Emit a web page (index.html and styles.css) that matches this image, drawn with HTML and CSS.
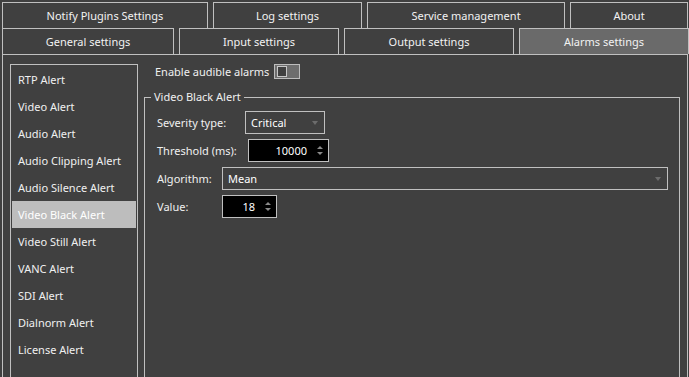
FILE: index.html
```html
<!DOCTYPE html>
<html>
<head>
<meta charset="utf-8">
<link rel="stylesheet" href="styles.css">
</head>
<body>
<div class="app">
  <div class="tabrow row1">
    <div class="tab t-notify">Notify Plugins Settings</div>
    <div class="tab t-log">Log settings</div>
    <div class="tab t-service">Service management</div>
    <div class="tab t-about">About</div>
  </div>
  <div class="tabrow row2">
    <div class="tab t-general">General settings</div>
    <div class="tab t-input">Input settings</div>
    <div class="tab t-output">Output settings</div>
    <div class="tab t-alarms selected">Alarms settings</div>
  </div>
  <div class="pane">
    <ul class="alert-list">
      <li>RTP Alert</li>
      <li>Video Alert</li>
      <li>Audio Alert</li>
      <li>Audio Clipping Alert</li>
      <li>Audio Silence Alert</li>
      <li class="active">Video Black Alert</li>
      <li>Video Still Alert</li>
      <li>VANC Alert</li>
      <li>SDI Alert</li>
      <li>Dialnorm Alert</li>
      <li>License Alert</li>
    </ul>
    <div class="settings">
      <div class="audible">
        <span>Enable audible alarms</span>
        <span class="toggle"><span class="knob"></span></span>
      </div>
      <fieldset class="group">
        <legend>Video Black Alert</legend>
        <div class="field">
          <span class="lbl lbl-sev">Severity type:</span>
          <div class="combo combo-sev"><span>Critical</span><span class="arrow"></span></div>
        </div>
        <div class="field">
          <span class="lbl lbl-thr">Threshold (ms):</span>
          <div class="spin spin-thr"><span class="val">10000</span><span class="spin-btns"><span class="up"></span><span class="down"></span></span></div>
        </div>
        <div class="field">
          <span class="lbl lbl-alg">Algorithm:</span>
          <div class="combo combo-alg"><span>Mean</span><span class="arrow"></span></div>
        </div>
        <div class="field">
          <span class="lbl lbl-alg">Value:</span>
          <div class="spin spin-val"><span class="val">18</span><span class="spin-btns"><span class="up"></span><span class="down"></span></span></div>
        </div>
      </fieldset>
    </div>
  </div>
</div>
</body>
</html>
```

FILE: styles.css
```css
html, body {
  margin: 0;
  padding: 0;
  background: #404040;
  overflow: hidden;
}
body {
  width: 689px;
  height: 377px;
  font-family: "Noto Sans", "Open Sans", sans-serif;
  font-size: 11px;
  color: #f0f0f0;
}
.app {
  padding-top: 2px;
}
.tabrow {
  display: flex;
  gap: 5px;
  margin-left: 2px;
}
.tab {
  box-sizing: border-box;
  height: 26px;
  border: 1px solid #c0c0c0;
  border-bottom: none;
  display: flex;
  align-items: center;
  justify-content: center;
  background: #404040;
  color: #f2f2f2;
}
.t-notify { width: 206px; }
.t-log { width: 149px; }
.t-service { width: 198px; }
.t-about { width: 118px; }
.t-general { width: 172px; }
.t-input { width: 160px; }
.t-output { width: 170px; }
.t-alarms { width: 170px; }
.tab.selected { background: #6a6a6a; }

.pane {
  box-sizing: border-box;
  margin-left: 2px;
  width: 686px;
  height: 340px;
  border: 1px solid #c0c0c0;
  border-bottom: none;
  padding: 9px 7px 0 7px;
  display: flex;
}
.alert-list {
  box-sizing: border-box;
  list-style: none;
  margin: 0;
  padding: 1px;
  width: 128px;
  border: 1px solid #c0c0c0;
  border-bottom: none;
}
.alert-list li {
  height: 27px;
  line-height: 27px;
  padding-left: 6px;
  white-space: nowrap;
}
.alert-list li.active {
  background: #bdbdbd;
  color: #ffffff;
}
.settings {
  flex: 1;
  margin-left: 6px;
  display: flex;
  flex-direction: column;
}
.audible {
  height: 15px;
  display: flex;
  align-items: center;
  gap: 5px;
  padding-left: 11px;
}
.toggle {
  box-sizing: border-box;
  width: 26px;
  height: 15px;
  border: 1px solid #bdbdbd;
  background: #6e6e6e;
  padding: 1px 2px;
  display: flex;
  align-items: center;
}
.knob {
  box-sizing: border-box;
  width: 10px;
  height: 11px;
  border: 1px solid #c8c8c8;
  background: #404040;
}
.group {
  flex: 1;
  margin: 10px 0 0 0;
  border: 1px solid #c0c0c0;
  border-bottom: none;
  padding: 6px 11px 0 12px;
  min-width: 0;
}
.group legend {
  margin-left: -6px;
  padding: 0 3px;
  line-height: 16px;
}
.field {
  display: flex;
  align-items: center;
  height: 23px;
  margin-bottom: 5px;
}
.lbl { flex: none; white-space: nowrap; }
.lbl-sev { width: 88px; }
.lbl-thr { width: 91px; }
.lbl-alg { width: 65px; }
.combo {
  box-sizing: border-box;
  height: 23px;
  border: 1px solid #c0c0c0;
  display: flex;
  align-items: center;
  padding: 0 5px 0 5px;
  color: #ffffff;
}
.combo-sev { width: 80px; }
.combo-alg { flex: 1; }
.arrow {
  margin-left: auto;
  width: 0;
  height: 0;
  border-left: 3px solid transparent;
  border-right: 3px solid transparent;
  border-top: 4px solid #6c6c6c;
  margin-right: 1px;
}
.spin {
  box-sizing: border-box;
  height: 23px;
  border: 1px solid #c0c0c0;
  background: #000000;
  display: flex;
  align-items: center;
  color: #ffffff;
}
.spin-thr { width: 81px; }
.spin-val { width: 55px; }
.spin .val {
  flex: 1;
  text-align: right;
  padding-right: 4px;
}
.spin-btns {
  width: 17px;
  display: flex;
  flex-direction: column;
  align-items: center;
  gap: 3px;
}
.spin-btns .up {
  width: 0;
  height: 0;
  border-left: 3px solid transparent;
  border-right: 3px solid transparent;
  border-bottom: 3px solid #8a8a8a;
}
.spin-btns .down {
  width: 0;
  height: 0;
  border-left: 3px solid transparent;
  border-right: 3px solid transparent;
  border-top: 3px solid #8a8a8a;
}
```
